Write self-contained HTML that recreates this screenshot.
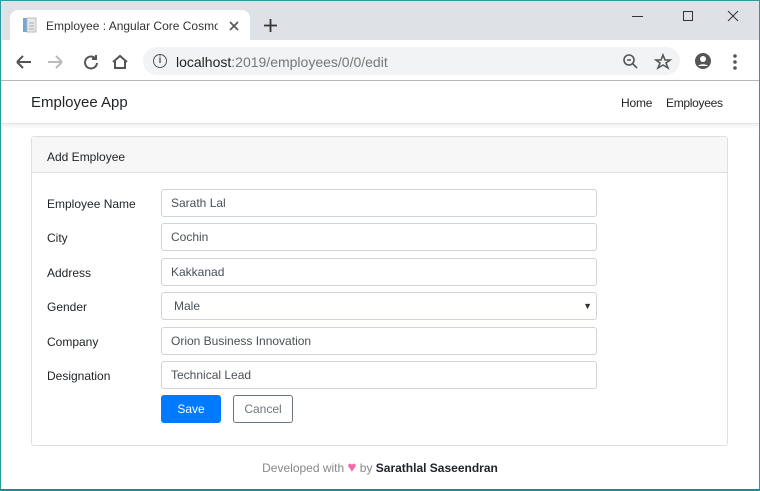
<!DOCTYPE html><html><head><style>
body{margin:0;width:760px;height:491px;overflow:hidden;font-family:"Liberation Sans",sans-serif;background:#fff;position:relative}
.abs{position:absolute}
.win{position:absolute;inset:0;border:1px solid #2a9aa0;border-bottom:2px solid #1f8a90;box-sizing:border-box;pointer-events:none}
.lbl{position:absolute;left:47px;font-size:12px;color:#212529}
.inp{position:absolute;left:161px;width:425px;height:26px;border:1px solid #ced4da;border-radius:3px;font-size:12px;color:#495057;line-height:26px;padding-left:9px;box-sizing:content-box}
</style></head><body>
<div class="abs" style="left:0;top:0;width:760px;height:40px;background:#dee1e6"></div>
<div class="abs" style="left:10px;top:10px;width:240px;height:30px;background:#fff;border-radius:8px 8px 0 0"></div>
<svg class="abs" style="left:22px;top:17px" width="16" height="16"><rect x="1" y="1" width="4" height="14" fill="#6fa8dc"/><rect x="5" y="1" width="9" height="14" fill="#e8e8e8" stroke="#bbb"/><line x1="7" y1="6" x2="12" y2="6" stroke="#aaa"/><line x1="7" y1="9" x2="12" y2="9" stroke="#aaa"/><line x1="7" y1="12" x2="12" y2="12" stroke="#aaa"/></svg>
<div class="abs" style="left:46px;top:19px;font-size:12px;color:#333;width:172px;overflow:hidden;white-space:nowrap">Employee : Angular Core Cosmos</div>
<svg class="abs" style="left:229px;top:21px" width="10" height="10" stroke="#555" stroke-width="1.6"><path d="M1 1l8 8M9 1l-8 8"/></svg>
<svg class="abs" style="left:264px;top:19px" width="13" height="13" stroke="#333" stroke-width="1.8"><path d="M6.5 0v13M0 6.5h13"/></svg>
<svg class="abs" style="left:630px;top:8px" width="115" height="18" stroke="#333" stroke-width="1" fill="none"><path d="M2 8.5h11"/><rect x="53.5" y="3.5" width="9" height="9"/><path d="M98 3l10 10M108 3l-10 10"/></svg>
<svg class="abs" style="left:14px;top:52px" width="120" height="20" fill="none" stroke-width="2"><path d="M3 10H17M3 10l6-6M3 10l6 6" stroke="#555"/><path d="M48 10H34M48 10l-6-6M48 10l-6 6" stroke="#bbb"/><path d="M81 6a6 6 0 1 0 2 5" stroke="#555"/><path d="M82 3v4h-4" stroke="#555"/><path d="M99 10l7-6 7 6M101 9v7h10V9" stroke="#555"/></svg>
<div class="abs" style="left:143px;top:47px;width:537px;height:28px;background:#f1f3f4;border-radius:14px"></div>
<div class="abs" style="left:153px;top:54px;width:12px;height:12px;border:1.5px solid #555;border-radius:50%;font-size:10px;text-align:center;line-height:12px;color:#555;font-weight:bold">i</div>
<div class="abs" style="left:176px;top:54px;font-size:14px;color:#222">localhost<span style="color:#777">:2019/employees/0/0/edit</span></div>
<svg class="abs" style="left:622px;top:53px" width="120" height="18" fill="none" stroke="#555" stroke-width="1.6"><circle cx="7" cy="7" r="5"/><path d="M11 11l4 4M5 7h4"/><path d="M41 2l2 5h5l-4 3 2 5-5-3-5 3 2-5-4-3h5z"/><circle cx="81" cy="8" r="8" fill="#555" stroke="none"/><circle cx="81" cy="6" r="3" fill="#fff" stroke="none"/><path d="M76 13a6 4 0 0 1 10 0" fill="#fff" stroke="none"/><circle cx="113" cy="3" r="1" fill="#555"/><circle cx="113" cy="9" r="1" fill="#555"/><circle cx="113" cy="15" r="1" fill="#555"/></svg>
<div class="abs" style="left:0;top:80px;width:760px;height:1px;background:#b8b8b8"></div>
<div class="abs" style="left:0;top:81px;width:760px;height:42px;background:#fff;box-shadow:0 2px 4px rgba(0,0,0,.08);border-bottom:1px solid #e5e5e5"></div>
<div class="abs" style="left:31px;top:94px;font-size:15px;color:#212529">Employee App</div>
<div class="abs" style="left:621px;top:96px;font-size:12px;color:#212529;letter-spacing:-0.2px">Home</div>
<div class="abs" style="left:666px;top:96px;font-size:12px;color:#212529;letter-spacing:-0.3px">Employees</div>
<div class="abs" style="left:31px;top:136px;width:695px;height:308px;border:1px solid #dfdfdf;border-radius:3px"></div>
<div class="abs" style="left:32px;top:137px;width:695px;height:35px;background:#f7f7f7;border-bottom:1px solid #dfdfdf"></div>
<div class="abs" style="left:47px;top:150px;font-size:12px;color:#212529">Add Employee</div>
<div class="lbl" style="top:197px">Employee Name</div><div class="inp" style="top:189px">Sarath Lal</div>
<div class="lbl" style="top:231px">City</div><div class="inp" style="top:223px">Cochin</div>
<div class="lbl" style="top:266px">Address</div><div class="inp" style="top:258px">Kakkanad</div>
<div class="lbl" style="top:300px">Gender</div><div class="inp" style="top:292px;padding-left:12px;width:422px">Male<span style="position:absolute;right:4px;font-size:9px;color:#333">▼</span></div>
<div class="lbl" style="top:335px">Company</div><div class="inp" style="top:327px">Orion Business Innovation</div>
<div class="lbl" style="top:369px">Designation</div><div class="inp" style="top:361px">Technical Lead</div>
<div class="abs" style="left:161px;top:395px;width:60px;height:28px;background:#007bff;border-radius:3px;color:#fff;font-size:12px;text-align:center;line-height:28px">Save</div>
<div class="abs" style="left:233px;top:395px;width:58px;height:26px;border:1px solid #6c757d;border-radius:3px;color:#6c757d;font-size:12px;text-align:center;line-height:26px">Cancel</div>
<div class="abs" style="left:0;width:760px;top:461px;text-align:center;font-size:12px;color:#888">Developed with <span style="color:#f06aa8;font-size:15px;line-height:12px">♥</span> by <b style="color:#212529">Sarathlal Saseendran</b></div>
<div class="win"></div>
</body></html>
